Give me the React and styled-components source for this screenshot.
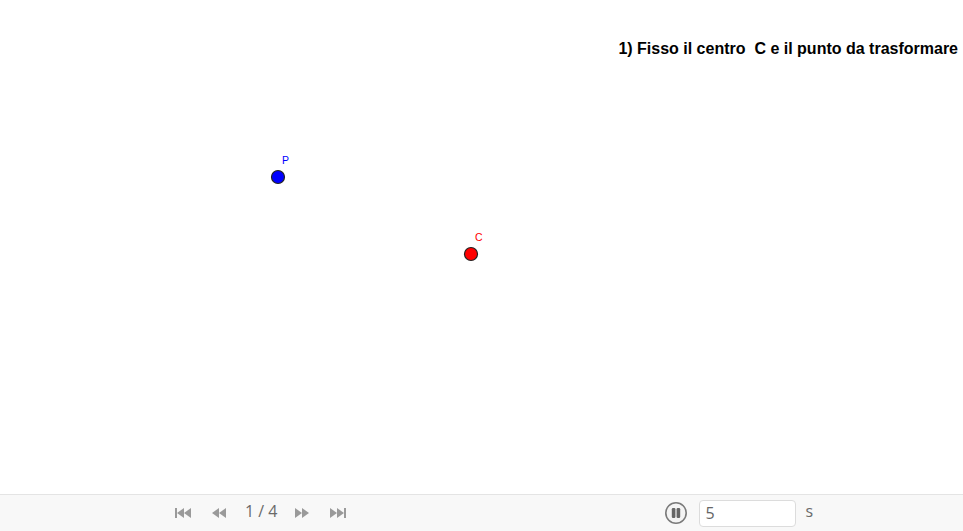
import React from "react";
import styled, { createGlobalStyle } from "styled-components";

const GlobalStyle = createGlobalStyle`
  html, body {
    margin: 0;
    padding: 0;
    background: #ffffff;
  }
  body {
    font-family: "Liberation Sans", Arial, sans-serif;
  }
`;

const Applet = styled.div`
  width: 963px;
  height: 531px;
  display: flex;
  flex-direction: column;
  overflow: hidden;
  background: #ffffff;
`;

const Canvas = styled.div`
  position: relative;
  flex: 1;
  background: #ffffff;
`;

const Caption = styled.div`
  position: absolute;
  top: 40px;
  right: 5px;
  font-family: "Liberation Sans", Arial, sans-serif;
  font-weight: bold;
  font-size: 16px;
  color: #000;
  white-space: pre;
`;

const Drawing = styled.svg`
  position: absolute;
  left: 0;
  top: 0;
`;

const Footer = styled.div`
  height: 36px;
  border-top: 1px solid #e4e4e4;
  background: #f8f8f8;
  display: flex;
  align-items: center;
  padding: 0 150px 0 174px;
`;

const Nav = styled.div`
  display: flex;
  align-items: center;
`;

const NavButton = styled.button`
  border: none;
  background: transparent;
  padding: 0;
  margin: 0 ${(p) => p.$gap || 0}px 0 0;
  width: 18px;
  height: 20px;
  display: flex;
  align-items: center;
  justify-content: center;
  cursor: pointer;
`;

const PageLabel = styled.span`
  font-family: "Open Sans", "DejaVu Sans", sans-serif;
  font-size: 16px;
  color: #6a6a6a;
  margin: 0 16px 0 1px;
  position: relative;
  top: -2px;
`;

const Right = styled.div`
  margin-left: auto;
  display: flex;
  align-items: center;
`;

const PauseButton = styled.button`
  border: none;
  background: transparent;
  padding: 0;
  width: 24px;
  height: 24px;
  margin-right: 11px;
  display: flex;
  align-items: center;
  justify-content: center;
`;

const SpeedInput = styled.input`
  box-sizing: border-box;
  width: 97px;
  height: 27px;
  border: 1px solid #dcdcdc;
  border-radius: 4px;
  background: #fff;
  padding: 0 5px;
  font-family: "Open Sans", "DejaVu Sans", sans-serif;
  font-size: 16px;
  color: #666;
  outline: none;
`;

const Unit = styled.span`
  font-family: "Open Sans", "DejaVu Sans", sans-serif;
  font-size: 16px;
  color: #6a6a6a;
  margin-left: 9px;
  position: relative;
  top: -2px;
`;

const ICON = "#9a9a9a";

const SkipStart = () => (
  <svg width="16" height="10" viewBox="0 0 16 10">
    <rect x="0" y="0" width="2" height="10" fill={ICON} />
    <polygon points="9,0 2,5 9,10" fill={ICON} />
    <polygon points="16,0 9,5 16,10" fill={ICON} />
  </svg>
);

const Rewind = () => (
  <svg width="16" height="10" viewBox="0 0 16 10">
    <polygon points="8,0 1,5 8,10" fill={ICON} />
    <polygon points="15,0 8,5 15,10" fill={ICON} />
  </svg>
);

const Forward = () => (
  <svg width="16" height="10" viewBox="0 0 16 10">
    <polygon points="1,0 8,5 1,10" fill={ICON} />
    <polygon points="8,0 15,5 8,10" fill={ICON} />
  </svg>
);

const SkipEnd = () => (
  <svg width="16" height="10" viewBox="0 0 16 10">
    <polygon points="0,0 7,5 0,10" fill={ICON} />
    <polygon points="7,0 14,5 7,10" fill={ICON} />
    <rect x="14" y="0" width="2" height="10" fill={ICON} />
  </svg>
);

const Pause = () => (
  <svg width="24" height="24" viewBox="0 0 24 24">
    <circle cx="12" cy="12" r="10.2" fill="#f4f4f4" stroke="#7a7a7a" strokeWidth="1.6" />
    <rect x="7.8" y="7" width="3.6" height="10" rx="1.2" fill="#666" />
    <rect x="12.6" y="7" width="3.6" height="10" rx="1.2" fill="#666" />
  </svg>
);

const points = [
  { name: "P", x: 278, y: 177, fill: "#0000ff", label: "#0000ff" },
  { name: "C", x: 471, y: 254, fill: "#ff0000", label: "#ff0000" },
];

export default function App() {
  return (
    <>
      <GlobalStyle />
      <Applet>
        <Canvas>
          <Drawing width="963" height="493">
            {points.map((p) => (
              <g key={p.name}>
                <circle cx={p.x} cy={p.y} r="6.5" fill={p.fill} stroke="#222" strokeWidth="1.2" />
                <text
                  x={p.x + 4}
                  y={p.y - 13}
                  fill={p.label}
                  fontFamily="Liberation Sans, Arial, sans-serif"
                  fontSize="10.5"
                >
                  {p.name}
                </text>
              </g>
            ))}
          </Drawing>
          <Caption>1) Fisso il centro  C e il punto da trasformare</Caption>
        </Canvas>
        <Footer>
          <Nav>
            <NavButton $gap={18}><SkipStart /></NavButton>
            <NavButton $gap={16}><Rewind /></NavButton>
            <PageLabel>1 / 4</PageLabel>
            <NavButton $gap={18}><Forward /></NavButton>
            <NavButton><SkipEnd /></NavButton>
          </Nav>
          <Right>
            <PauseButton><Pause /></PauseButton>
            <SpeedInput defaultValue="5" />
            <Unit>s</Unit>
          </Right>
        </Footer>
      </Applet>
    </>
  );
}
